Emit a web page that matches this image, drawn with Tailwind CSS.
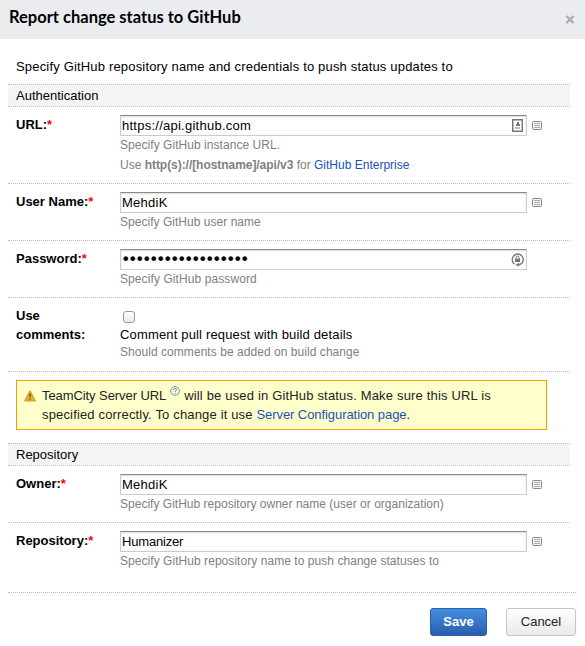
<!DOCTYPE html>
<html lang="en">
<head>
<meta charset="utf-8">
<title>Report change status to GitHub</title>
<script src="https://cdn.jsdelivr.net/npm/@tailwindcss/browser@4"></script>
</head>
<body class="w-[585px] h-[646px] overflow-hidden bg-white text-black text-[13px] leading-[19px] font-['Liberation_Sans',Arial,sans-serif]">
<svg class="hidden">
  <symbol id="list" viewBox="0 0 10 9"><rect x=".5" y=".5" width="9" height="8" rx=".8" fill="#f5f5f5" stroke="#8a8a8a"/><path d="M2 2.5h6M2 4.5h6M2 6.5h6" stroke="#aaa"/></symbol>
</svg>
<header class="flex h-[39px] items-start justify-between bg-[#ebecf0] pl-[9px] pr-[10px]">
  <h1 class="pt-[6px] font-['Lato',sans-serif] text-[16.5px] leading-[22px] font-bold whitespace-nowrap">Report change status to GitHub</h1>
  <svg class="mt-[15px] h-[9px] w-[10px]" viewBox="0 0 10 9"><path d="M1.5 1l7 7M8.5 1l-7 7" stroke="#aaa" stroke-width="2.2"/></svg>
</header>
<main class="pl-2">
  <p class="h-[45px] pt-[18px] pl-2 whitespace-nowrap"><span class="tracking-[0.175px]">Specify GitHub repository name and credentials to push status updates to</span></p>
  <div class="w-[562px]">
    <h2 class="h-[22px] border-t border-dotted border-[#bbb] bg-[#f4f4f4] pl-2 pt-[1px]">Authentication</h2>
    <section class="flex h-[77px] border-t border-dotted border-[#bbb] pl-2 pt-2">
      <div class="w-[104px] font-bold">URL:<span class="text-[#f00]">*</span></div>
      <div>
        <div class="flex items-center">
          <div class="flex h-[21px] w-[407px] items-center justify-between border border-t-[#888] border-[#ccc] pl-px pr-[3px] shadow-[inset_0_1px_2px_#ddd]"><span class="tracking-[0.25px]">https://api.github.com</span>
            <svg class="h-[13px] w-[11px]" viewBox="0 0 11 13"><rect x=".75" y=".75" width="9.5" height="11.5" fill="#fff" stroke="#777" stroke-width="1.5"/><path d="M5 3h2v2h1v2H4V5h1z" fill="#777"/><path d="M3 8h5v2H3z" fill="#bbb"/></svg></div>
          <svg class="ml-[5px] h-[9px] w-[10px]"><use href="#list"/></svg>
        </div>
        <p class="text-[12px] leading-[20px] text-[#808080] -mt-px tracking-[0.05px]">Specify GitHub instance URL.</p>
        <p class="text-[12px] leading-[20px] text-[#808080]">Use <b class="tracking-[-0.05px]">http(s)://[hostname]/api/v3</b> for <a class="text-[#1a52b5]">GitHub Enterprise</a></p>
      </div>
    </section>
    <section class="flex h-[57px] border-t border-dotted border-[#bbb] pl-2 pt-2">
      <div class="w-[104px] font-bold">User Name:<span class="text-[#f00]">*</span></div>
      <div>
        <div class="flex items-center">
          <div class="flex h-[21px] w-[407px] items-center border border-t-[#888] border-[#ccc] pl-px shadow-[inset_0_1px_2px_#ddd]"><span class="tracking-[0.25px]">MehdiK</span></div>
          <svg class="ml-[5px] h-[9px] w-[10px]"><use href="#list"/></svg>
        </div>
        <p class="text-[12px] leading-[20px] text-[#808080] -mt-px tracking-[0.03px]">Specify GitHub user name</p>
      </div>
    </section>
    <section class="flex h-[57px] border-t border-dotted border-[#bbb] pl-2 pt-2">
      <div class="w-[104px] font-bold">Password:<span class="text-[#f00]">*</span></div>
      <div>
        <div class="flex h-[21px] w-[407px] items-center justify-between border border-t-[#888] border-[#ccc] pl-px pr-[2px] shadow-[inset_0_1px_2px_#ddd]">
          <span class="-ml-px font-['DejaVu_Sans',sans-serif] text-[16px] tracking-[-2.44px]">••••••••••••••••••</span>
          <svg class="h-[14px] w-[13px]" viewBox="0 0 13 14" fill="none"><path d="M3.500 11A5.500 5.500 0 1 1 10 11L7.500 12" stroke="#777" stroke-width="1.4"/><path d="M7.800 9.700v4L4.500 11.800z" fill="#777"/><path d="M4 5.600h5V9H4z" fill="#777"/><path d="M5 6V4.600a1.500 1.500 0 0 1 3 0V6" stroke="#777"/></svg></div>
        <p class="text-[12px] leading-[20px] text-[#808080] -mt-px tracking-[0.09px]">Specify GitHub password</p>
      </div>
    </section>
    <section class="flex h-[74px] border-t border-dotted border-[#bbb] pl-2 pt-2">
      <div class="w-[104px] font-bold">Use<br>comments:</div>
      <div>
        <div class="mt-[5px] ml-[3px] h-[12px] w-[12px] rounded-[3px] border border-[#999] bg-linear-to-b from-white to-[#e8e8e8]"></div>
        <p class="mt-[2px] tracking-[0.16px]">Comment pull request with build details</p>
        <p class="text-[12px] leading-[17px] text-[#808080] tracking-[0.05px]">Should comments be added on build change</p>
      </div>
    </section>
    <section class="h-[72px] border-t border-dotted border-[#bbb] pl-2 pt-2">
      <div class="flex h-[50px] w-[531px] border border-[#f90] bg-[#ffc] pl-[7px] pt-[5px] text-[#222]">
        <svg class="mt-[4px] h-[12px] w-[12px]" viewBox="0 0 12 12"><path d="M6 1L11.200 10.800H.800z" fill="#e9b030" stroke="#d9a02c" stroke-width="1.4" stroke-linejoin="round"/><path d="M6 3.800v3.400M6 8.400v1.400" stroke="#6d5010" stroke-width="1.4"/></svg>
        <p class="ml-[6px] whitespace-nowrap"><span class="tracking-[-0.08px]">TeamCity Server URL</span><svg class="relative -top-[4px] ml-1 mr-[4px] inline-block h-[10px] w-[10px] align-baseline" viewBox="0 0 10 10" fill="none"><circle cx="5" cy="5" r="4.4" stroke="#5c8aab" stroke-width=".9"/><path d="M3.5 4c0-2 3-2 3-.3C6.500 4.800 5 4.700 5 6M5 7v1" stroke="#35769f"/></svg><span class="tracking-[0.17px]">will be used in GitHub status. Make sure this URL is</span><br><span class="tracking-[0.08px]"><span class="tracking-[0.16px]">specified correctly. To change it use </span><a class="text-[#1a52b5] tracking-[-0.07px]">Server Configuration page</a>.</span></p>
      </div>
    </section>
    <h2 class="h-[22px] border-t border-dotted border-[#bbb] bg-[#f4f4f4] pl-2 pt-[1px]">Repository</h2>
    <section class="flex h-[57px] border-t border-dotted border-[#bbb] pl-2 pt-2">
      <div class="w-[104px] font-bold">Owner:<span class="text-[#f00]">*</span></div>
      <div>
        <div class="flex items-center">
          <div class="flex h-[21px] w-[407px] items-center border border-t-[#888] border-[#ccc] pl-px shadow-[inset_0_1px_2px_#ddd]"><span class="tracking-[0.25px]">MehdiK</span></div>
          <svg class="ml-[5px] h-[9px] w-[10px]"><use href="#list"/></svg>
        </div>
        <p class="text-[12px] leading-[20px] text-[#808080] -mt-px tracking-[0.015px]">Specify GitHub repository owner name (user or organization)</p>
      </div>
    </section>
    <section class="flex h-[70px] border-t border-dotted border-[#bbb] pl-2 pt-2">
      <div class="w-[104px] font-bold">Repository:<span class="text-[#f00]">*</span></div>
      <div>
        <div class="flex items-center">
          <div class="flex h-[21px] w-[407px] items-center border border-t-[#888] border-[#ccc] pl-px shadow-[inset_0_1px_2px_#ddd]"><span class="tracking-[-0.18px]">Humanizer</span></div>
          <svg class="ml-[5px] h-[9px] w-[10px]"><use href="#list"/></svg>
        </div>
        <p class="text-[12px] leading-[20px] text-[#808080] -mt-px tracking-[0.05px]">Specify GitHub repository name to push change statuses to</p>
      </div>
    </section>
  </div>
  <footer class="flex w-[568px] justify-end gap-[19px] border-t border-dotted border-[#bbb] pt-[15px]">
    <button class="h-[28px] w-[57px] rounded-[3px] border border-[#2a5db0] bg-linear-to-b from-[#4390df] to-[#2a5db0] pb-px font-bold text-white">Save</button>
    <button class="h-[28px] w-[70px] rounded-[3px] border border-[#c4c4c4] bg-linear-to-b from-white to-[#e9e9e9] pb-px text-[#222]">Cancel</button>
  </footer>
</main>
</body>
</html>
